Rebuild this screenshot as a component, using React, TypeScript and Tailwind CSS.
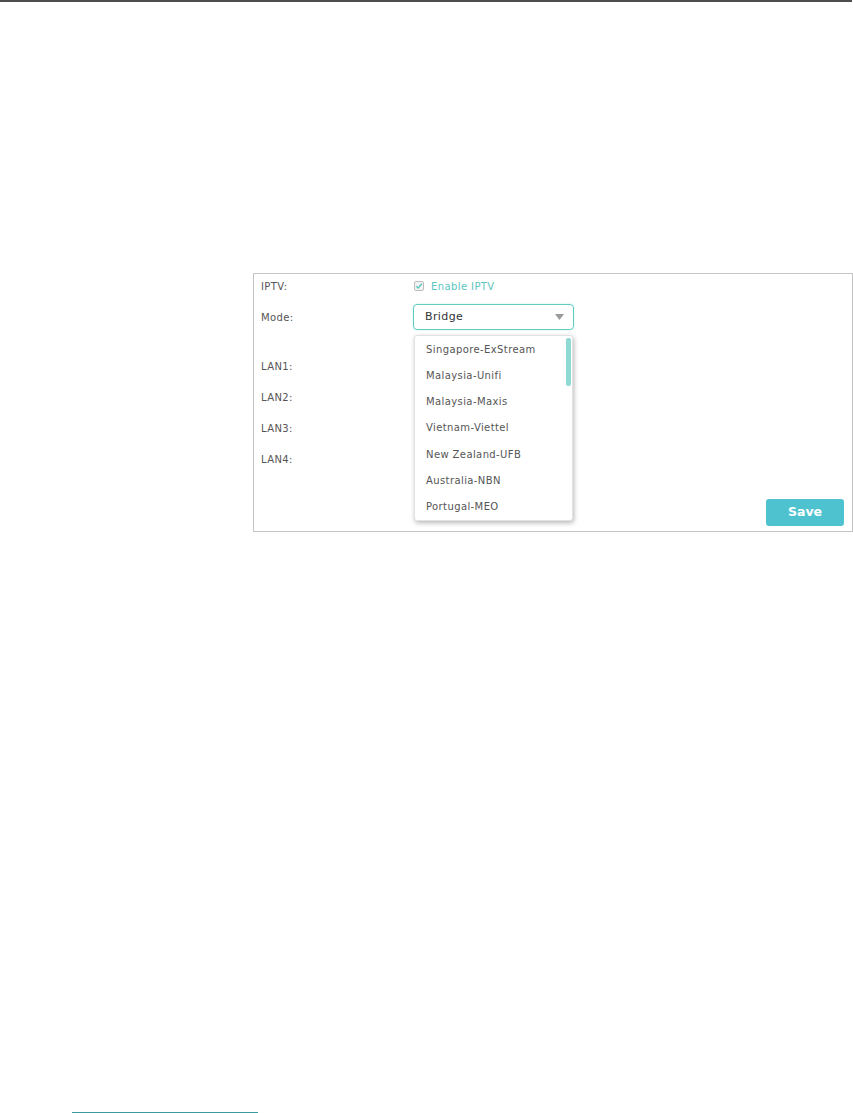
import React from "react";

const items = [
  "Singapore-ExStream",
  "Malaysia-Unifi",
  "Malaysia-Maxis",
  "Vietnam-Viettel",
  "New Zealand-UFB",
  "Australia-NBN",
  "Portugal-MEO",
];

export default function App() {
  return (
    <div
      className="relative flex h-[1113px] w-[853px] flex-col bg-white tracking-[0.4px]"
      style={{ fontFamily: '"DejaVu Sans", Verdana, sans-serif' }}
    >
      <div className="h-[2px] w-[852px] bg-[#4d4d4d]" />
      <div className="ml-[253px] mt-[271px] flex h-[259px] w-[600px] flex-col border border-[#c4c4c4] relative">
        <div className="flex h-[23px] items-center pl-[7px] pt-[1px]">
          <div className="w-[153px] text-[10px] text-[#555]">IPTV:</div>
          <div className="flex items-center gap-[7px]">
            <div className="flex h-[10px] w-[10px] items-center justify-center rounded-[2px] border border-[#bdbdbd] bg-[#f3f3f3]">
              <svg width="8" height="8" viewBox="0 0 8 8">
                <path d="M1.3 4.2 L3.2 6 L6.8 1.8" fill="none" stroke="#5fc7c0" strokeWidth="1.5" />
              </svg>
            </div>
            <span className="text-[10px] text-[#5cc5c0]">Enable IPTV</span>
          </div>
        </div>
        <div className="flex h-[40px] items-center pl-[7px]">
          <div className="w-[152px] text-[10px] text-[#555]">Mode:</div>
          <div className="flex h-[26px] w-[161px] items-center justify-between rounded-[4px] border border-[#5fcdc0] pl-[11px] pr-[9px] shadow-[0_0_2px_rgba(95,205,192,0.4)]">
            <span className="text-[11px] text-[#333]">Bridge</span>
            <svg width="9" height="6" viewBox="0 0 9 6">
              <path d="M0 0 H9 L4.5 6 Z" fill="#9a9a9a" />
            </svg>
          </div>
        </div>
        <div className="h-[14px]" />
        {["LAN1:", "LAN2:", "LAN3:", "LAN4:"].map((l) => (
          <div key={l} className="flex h-[31px] items-center pl-[7px] text-[10px] text-[#555]">
            {l}
          </div>
        ))}
        <div className="mt-auto flex justify-end pb-[5px] pr-[8px]">
          <button className="h-[27px] w-[78px] rounded-[3px] bg-[#4ec3cf] text-[12.5px] font-semibold tracking-normal text-white">
            Save
          </button>
        </div>
        <div className="absolute left-[160px] top-[61px] flex h-[186px] w-[159px] flex-col rounded-[3px] border border-[#e2e2e2] bg-white shadow-[1px_2px_5px_rgba(0,0,0,0.28)]">
          {items.map((it) => (
            <div key={it} className="flex h-[26.3px] items-center pl-[11px] text-[10px] text-[#555]">
              {it}
            </div>
          ))}
          <div className="absolute right-[1px] top-[2px] h-[48px] w-[5px] rounded-[2px] bg-[#8fdad4]" />
        </div>
      </div>
      <div className="mt-auto ml-[72px] h-[1px] w-[186px] bg-[#3a9a9e]" />
    </div>
  );
}
